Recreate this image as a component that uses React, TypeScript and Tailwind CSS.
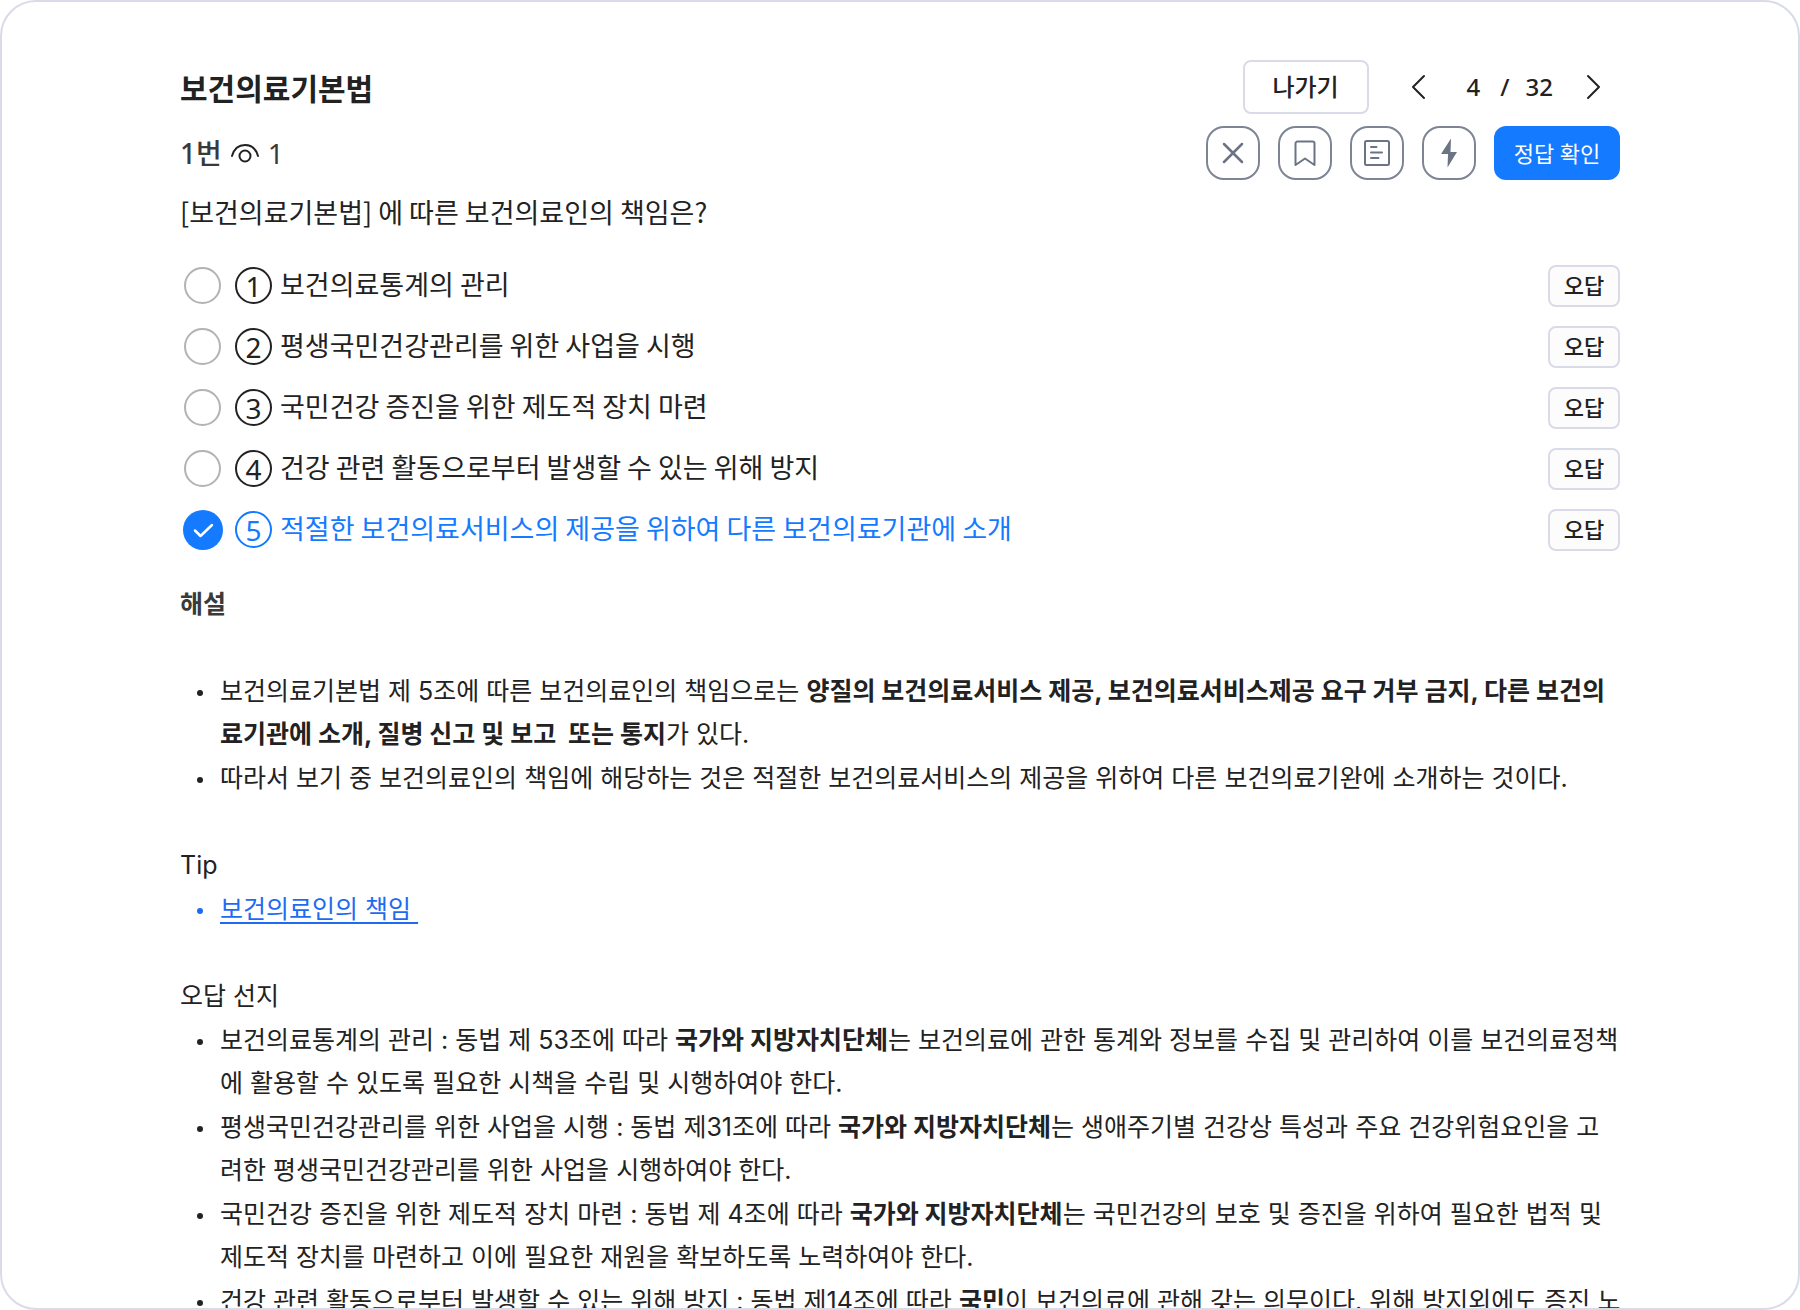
import { useState, type ReactNode } from "react";

const choices = [
  "보건의료통계의 관리",
  "평생국민건강관리를 위한 사업을 시행",
  "국민건강 증진을 위한 제도적 장치 마련",
  "건강 관련 활동으로부터 발생할 수 있는 위해 방지",
  "적절한 보건의료서비스의 제공을 위하여 다른 보건의료기관에 소개",
];

function ToolButton({ label, children }: { label: string; children: ReactNode }) {
  return (
    <button
      type="button"
      aria-label={label}
      className="flex size-[54px] items-center justify-center rounded-[18px] border-2 border-[#7d8594] text-[#6b7485]"
    >
      {children}
    </button>
  );
}

function Chevron({ label, d }: { label: string; d: string }) {
  return (
    <button type="button" aria-label={label} className="p-1">
      <svg width="18" height="26" viewBox="0 0 18 26" fill="none" stroke="currentColor" strokeWidth="2">
        <path d={d} strokeLinecap="round" strokeLinejoin="round" />
      </svg>
    </button>
  );
}

function Item({ children }: { children: ReactNode }) {
  return (
    <li className="flex">
      <span aria-hidden="true" className="flex h-[43px] w-10 shrink-0 items-center pl-[17px]">
        <span className="mt-0.5 size-[6px] rounded-full bg-current" />
      </span>
      <div>{children}</div>
    </li>
  );
}

export default function App() {
  const [selected, setSelected] = useState(4);

  return (
    <div className="h-screen overflow-hidden rounded-[36px] border-2 border-[#d9dce8] bg-white px-[178px] pt-[58px] font-['Noto_Sans','Noto_Sans_CJK_KR',sans-serif] text-[#222]">
      <header className="flex items-center justify-between">
        <h1 className="font-['Noto_Sans_CJK_KR',sans-serif] text-[30px] leading-[54px] font-bold">보건의료기본법</h1>
        <div className="flex items-center text-2xl font-medium">
          <button type="button" className="h-[54px] w-[126px] rounded-lg border-2 border-[#d9dce8]">
            나가기
          </button>
          <nav aria-label="문제 이동" className="ml-9 mr-[13px] flex items-center">
            <Chevron label="이전 문제" d="M15 2 4 13l11 11" />
            <span className="ml-9 flex gap-5">
              <span>4</span>
              <span>/</span>
              <span className="-ml-1">32</span>
            </span>
            <span className="ml-7 flex">
              <Chevron label="다음 문제" d="M3 2l11 11L3 24" />
            </span>
          </nav>
        </div>
      </header>

      <div className="mt-3 flex items-center justify-between">
        <h2 className="flex items-center text-[28px] text-[#3a3a3a]">
          <span className="font-medium">1번</span>
          <svg className="mx-2" width="30" height="24" viewBox="0 0 30 24" fill="none" stroke="#222" strokeWidth="2">
            <path d="M2 15C4 8 9 4 15 4s11 4 13 11" strokeLinecap="round" />
            <circle cx="15" cy="15" r="5.500" />
          </svg>
          <span>1</span>
        </h2>
        <div className="flex gap-[18px]">
          <ToolButton label="닫기">
            <svg width="24" height="24" viewBox="0 0 24 24" fill="none" stroke="currentColor" strokeWidth="2.500" strokeLinecap="round">
              <path d="M3 3l18 18M21 3 3 21" />
            </svg>
          </ToolButton>
          <ToolButton label="북마크">
            <svg width="22" height="26" viewBox="0 0 22 26" fill="none" stroke="currentColor" strokeWidth="2" strokeLinejoin="round">
              <path d="M1.500 25V3.500a2 2 0 0 1 2-2h15a2 2 0 0 1 2 2V25L11 18.500z" />
            </svg>
          </ToolButton>
          <ToolButton label="메모">
            <svg width="26" height="26" viewBox="0 0 26 26" fill="none" stroke="currentColor" strokeWidth="2">
              <rect x="1" y="1" width="24" height="24" rx="1.500" />
              <path d="M7 7h5.500M7 12.500h11M7 18h7.500" strokeLinecap="round" />
            </svg>
          </ToolButton>
          <ToolButton label="퀵 메뉴">
            <svg width="18" height="30" viewBox="0 0 18 30" fill="currentColor">
              <path d="M11 0.500 1 16h7L7.500 29.500 17 14h-6.500z" />
            </svg>
          </ToolButton>
          <button type="button" className="h-[54px] w-[126px] rounded-xl bg-[#147aff] text-[22px] text-white">
            정답 확인
          </button>
        </div>
      </div>

      <p className="mt-3 font-['Noto_Sans_CJK_KR',sans-serif] text-[27px] leading-10">
        [보건의료기본법] 에 따른 보건의료인의 책임은?
      </p>

      <ul className="mt-[23px]">
        {choices.map((choice, index) => {
          const active = index === selected;
          return (
            <li key={choice} className="flex h-[61px] items-center justify-between">
              <label className={active ? "flex items-center text-[#147aff]" : "flex items-center"}>
                <span className="flex w-[45px] justify-center">
                  <input
                    type="radio"
                    name="choice"
                    checked={active}
                    onChange={() => setSelected(index)}
                    className="sr-only"
                  />
                  {active ? (
                    <svg width="40" height="40" viewBox="0 0 40 40" fill="none">
                      <circle cx="20" cy="20" r="20" fill="#147aff" />
                      <path d="M12 20.500l5.500 5.500L29 15" stroke="#fff" strokeWidth="2.500" strokeLinecap="round" strokeLinejoin="round" />
                    </svg>
                  ) : (
                    <span className="size-[37px] rounded-full border-2 border-[#b3b3b3]" />
                  )}
                </span>
                <span className="ml-[10px] flex size-[37px] items-center justify-center rounded-full border-2 border-current text-[28px] leading-none">
                  {index + 1}
                </span>
                <span className="ml-2 pb-1 font-['Noto_Sans_CJK_KR',sans-serif] text-[27px] leading-10">{choice}</span>
              </label>
              <button
                type="button"
                className="flex h-[42px] w-[72px] items-center justify-center rounded-lg border-2 border-[#d9dce8] bg-[#fcfcfc] text-[22px] font-medium"
              >
                오답
              </button>
            </li>
          );
        })}
      </ul>

      <section className="-mr-1 mt-[23px] font-[Inter,'Noto_Sans_CJK_KR',sans-serif] text-[25px] leading-[43px]">
        <h3 className="font-bold text-[#3a3a3a]">해설</h3>
        <ul className="mt-[44px] space-y-px">
          <Item>
            보건의료기본법 제 5조에 따른 보건의료인의 책임으로는{" "}
            <b>양질의 보건의료서비스 제공, 보건의료서비스제공 요구 거부 금지, 다른 보건의료기관에 소개, 질병 신고 및 보고&nbsp; 또는 통지</b>가 있다.
          </Item>
          <Item>
            따라서 보기 중 보건의료인의 책임에 해당하는 것은 적절한 보건의료서비스의 제공을 위하여 다른 보건의료기완에 소개하는 것이다.
          </Item>
        </ul>

        <h3 className="mt-[44px]">Tip</h3>
        <ul className="mt-px text-[#1e6bf1]">
          <Item>
            <a href="#responsibility" className="underline decoration-2 underline-offset-4">
              보건의료인의 책임&nbsp;
            </a>
          </Item>
        </ul>

        <h3 className="mt-[44px]">오답 선지</h3>
        <ul className="mt-px space-y-px">
          <Item>
            보건의료통계의 관리 : 동법 제 53조에 따라 <b>국가와 지방자치단체</b>는 보건의료에 관한 통계와 정보를 수집 및 관리하여 이를 보건의료정책에 활용할 수 있도록 필요한 시책을 수립 및 시행하여야 한다.
          </Item>
          <Item>
            평생국민건강관리를 위한 사업을 시행 : 동법 제31조에 따라 <b>국가와 지방자치단체</b>는 생애주기별 건강상 특성과 주요 건강위험요인을 고
            <br />
            려한 평생국민건강관리를 위한 사업을 시행하여야 한다.
          </Item>
          <Item>
            국민건강 증진을 위한 제도적 장치 마련 : 동법 제 4조에 따라 <b>국가와 지방자치단체</b>는 국민건강의 보호 및 증진을 위하여 필요한 법적 및 제도적 장치를 마련하고 이에 필요한 재원을 확보하도록 노력하여야 한다.
          </Item>
          <Item>
            건강 관련 활동으로부터 발생할 수 있는 위해 방지 : 동법 제14조에 따라 <b>국민</b>이 보건의료에 관해 갖는 의무이다. 위해 방지외에도 증진 노
          </Item>
        </ul>
      </section>
    </div>
  );
}
